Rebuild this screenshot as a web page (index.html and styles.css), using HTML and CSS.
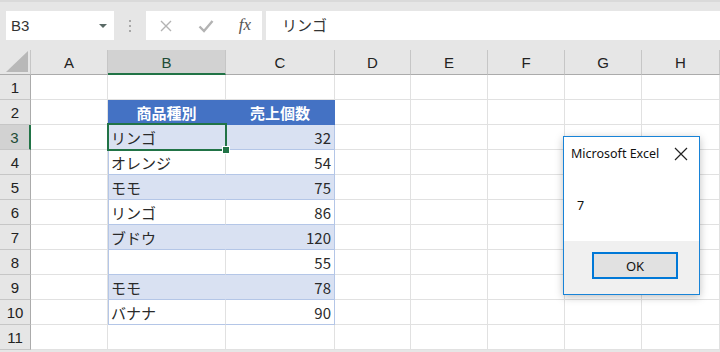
FILE: index.html
```html
<!DOCTYPE html>
<html>
<head>
<meta charset="utf-8" />
<link rel="stylesheet" href="styles.css">
</head>
<body>
<div class="toolbar">
  <div class="namebox"><span>B3</span><span class="drop"></span></div>
  <div class="grip"><i></i><i></i><i></i></div>
  <div class="fbtns">
    <svg width="14" height="14" viewBox="0 0 14 14"><path d="M2 2L12 12M12 2L2 12" stroke="#b3b3b3" stroke-width="1.4" fill="none"/></svg>
    <svg width="16" height="14" viewBox="0 0 16 14"><path d="M1.5 7.5L6 12L14.5 2" stroke="#b3b3b3" stroke-width="2.4" fill="none"/></svg>
    <span class="fx">fx</span>
  </div>
  <div class="finput">リンゴ</div>
</div>
<div class="sheet">
  <div class="corner"><svg width="22" height="21" viewBox="0 0 22 21"><path d="M22 0V21H0Z" fill="#b8b8b8"/></svg></div>
  <div class="colhead">A</div><div class="colhead sel">B</div><div class="colhead">C</div><div class="colhead">D</div><div class="colhead">E</div><div class="colhead">F</div><div class="colhead">G</div><div class="colhead">H</div>

  <div class="rowhead">1</div><div class="cell"></div><div class="cell"></div><div class="cell"></div><div class="cell"></div><div class="cell"></div><div class="cell"></div><div class="cell"></div><div class="cell"></div>
  <div class="rowhead">2</div><div class="cell"></div><div class="cell t-head">商品種別</div><div class="cell t-head">売上個数</div><div class="cell"></div><div class="cell"></div><div class="cell"></div><div class="cell"></div><div class="cell"></div>
  <div class="rowhead sel">3</div><div class="cell"></div><div class="cell t-band t-l active">リンゴ</div><div class="cell t-band t-r num">32</div><div class="cell"></div><div class="cell"></div><div class="cell"></div><div class="cell"></div><div class="cell"></div>
  <div class="rowhead">4</div><div class="cell"></div><div class="cell t-row t-l">オレンジ</div><div class="cell t-row t-r num">54</div><div class="cell"></div><div class="cell"></div><div class="cell"></div><div class="cell"></div><div class="cell"></div>
  <div class="rowhead">5</div><div class="cell"></div><div class="cell t-band t-l">モモ</div><div class="cell t-band t-r num">75</div><div class="cell"></div><div class="cell"></div><div class="cell"></div><div class="cell"></div><div class="cell"></div>
  <div class="rowhead">6</div><div class="cell"></div><div class="cell t-row t-l">リンゴ</div><div class="cell t-row t-r num">86</div><div class="cell"></div><div class="cell"></div><div class="cell"></div><div class="cell"></div><div class="cell"></div>
  <div class="rowhead">7</div><div class="cell"></div><div class="cell t-band t-l">ブドウ</div><div class="cell t-band t-r num">120</div><div class="cell"></div><div class="cell"></div><div class="cell"></div><div class="cell"></div><div class="cell"></div>
  <div class="rowhead">8</div><div class="cell"></div><div class="cell t-row t-l"></div><div class="cell t-row t-r num">55</div><div class="cell"></div><div class="cell"></div><div class="cell"></div><div class="cell"></div><div class="cell"></div>
  <div class="rowhead">9</div><div class="cell"></div><div class="cell t-band t-l">モモ</div><div class="cell t-band t-r num">78</div><div class="cell"></div><div class="cell"></div><div class="cell"></div><div class="cell"></div><div class="cell"></div>
  <div class="rowhead">10</div><div class="cell"></div><div class="cell t-row t-l">バナナ</div><div class="cell t-row t-r num">90</div><div class="cell"></div><div class="cell"></div><div class="cell"></div><div class="cell"></div><div class="cell"></div>
  <div class="rowhead">11</div><div class="cell"></div><div class="cell"></div><div class="cell"></div><div class="cell"></div><div class="cell"></div><div class="cell"></div><div class="cell"></div><div class="cell"></div>
</div>

<div class="msgbox">
  <div class="msg-title"><span>Microsoft Excel</span>
    <svg width="14" height="14" viewBox="0 0 14 14"><path d="M1 1L13 13M13 1L1 13" stroke="#222" stroke-width="1.2" fill="none"/></svg>
  </div>
  <div class="msg-body">7</div>
  <div class="msg-foot"><div class="msg-btn">OK</div></div>
</div>
</body>
</html>
```

FILE: styles.css
```css
:root {--bar-bg: #e6e6e6; --grid: #e1e1e1; --head-line: #c6c6c6; --green: #217346; --t-blue: #4472c4; --t-band: #d9e1f2; --t-line: #b4c6e7;}
* {box-sizing: border-box;}
body {margin: 0; background: var(--bar-bg); font-family: "Liberation Sans", "Noto Sans CJK JP", sans-serif; color: #333; overflow: hidden;}

.toolbar {height: 50px; display: flex; align-items: flex-start; padding: 11px 0 0 6px; border-top: 2px solid #dadada;}
.namebox {width: 108px; height: 29px; background: #fff; display: flex; align-items: center; justify-content: space-between; padding: 0 7px 0 5px; font-size: 15px; color: #333; margin-top: -2px;}
.drop {width: 0; height: 0; border-left: 4px solid transparent; border-right: 4px solid transparent; border-top: 4px solid #5a6a66;}
.grip {width: 32px; height: 29px; display: flex; flex-direction: column; align-items: center; justify-content: center; gap: 3px; margin-top: -2px;}
.grip i {width: 2px; height: 2px; background: #a8a8a8;}
.fbtns {width: 116px; height: 29px; background: #fff; display: flex; align-items: center; justify-content: space-between; padding: 0 11px 0 13px; margin-top: -2px;}
.fx {font-family: "Liberation Serif", serif; font-style: italic; font-size: 17px; color: #555; padding-bottom: 2px;}
.finput {flex: 1; height: 29px; background: #fff; margin: -2px 0 0 4px; padding: 3px 0 0 16px; font-family: "Noto Sans CJK JP", sans-serif; font-size: 15px; color: #333;}

.sheet {display: grid; grid-template-columns: 31px 77px 118px 109px 76px 77px 77px 77px 78px; grid-auto-rows: 25px; background: #fff;}
.corner {background: var(--bar-bg); border-right: 1px solid var(--head-line); border-bottom: 1px solid #ababab; display: flex; align-items: flex-end; justify-content: flex-end; padding: 0 2px 2px 0;}
.colhead {background: var(--bar-bg); border-right: 1px solid var(--head-line); border-bottom: 1px solid #ababab; font-size: 15px; color: #222; display: flex; align-items: center; justify-content: center; padding-top: 1px;}
.colhead.sel {background: #d2d2d2; border-bottom: 2px solid var(--green); color: #1e4b36;}
.rowhead {background: var(--bar-bg); border-right: 1px solid #ababab; border-bottom: 1px solid var(--head-line); font-size: 15px; color: #222; display: flex; align-items: center; justify-content: center;}
.rowhead.sel {background: #d2d2d2; border-right: 2px solid var(--green); color: #1e4b36;}

.cell {border-right: 1px solid var(--grid); border-bottom: 1px solid var(--grid); font-family: "Noto Sans CJK JP", sans-serif; font-size: 15px; color: #2a2a2a; padding: 0 3px; display: flex; align-items: center; white-space: nowrap;}
.num {justify-content: flex-end;}
.t-head {background: var(--t-blue); border-color: var(--t-blue); color: #fff; font-weight: bold; justify-content: center;}
.t-band {background: var(--t-band); border-bottom-color: var(--t-line); border-right-color: var(--t-band);}
.t-row {border-bottom-color: var(--t-line);}
.t-l {border-left: 1px solid var(--t-line); padding-left: 2px;}
.t-r {border-right-color: var(--t-line);}
.active {position: relative;}
.active::after {content: ""; position: absolute; left: -2px; top: -2px; right: -2px; bottom: -2px; border: 2px solid var(--green);}
.active::before {content: ""; position: absolute; right: -5px; bottom: -5px; width: 6px; height: 6px; background: var(--green); border: 1px solid #fff; z-index: 1;}

.msgbox {position: absolute; left: 563px; top: 136px; width: 137px; height: 159px; background: #fff; border: 1px solid #1883d7; box-shadow: 0 2px 8px rgba(0, 0, 0, 0.25); display: flex; flex-direction: column; font-family: "Noto Sans", sans-serif; color: #111;}
.msg-title {height: 32px; display: flex; align-items: center; justify-content: space-between; padding: 1px 11px 0 7px; font-size: 12.5px;}
.msg-body {flex: 1; padding: 28px 0 0 13px; font-size: 12.5px;}
.msg-foot {height: 53px; background: #f0f0f0; display: flex; justify-content: flex-end; padding: 11px 21px 0 0;}
.msg-btn {width: 86px; height: 27px; background: #e1e1e1; border: 2px solid #0078d7; display: flex; align-items: center; justify-content: center; font-size: 13px;}
```
